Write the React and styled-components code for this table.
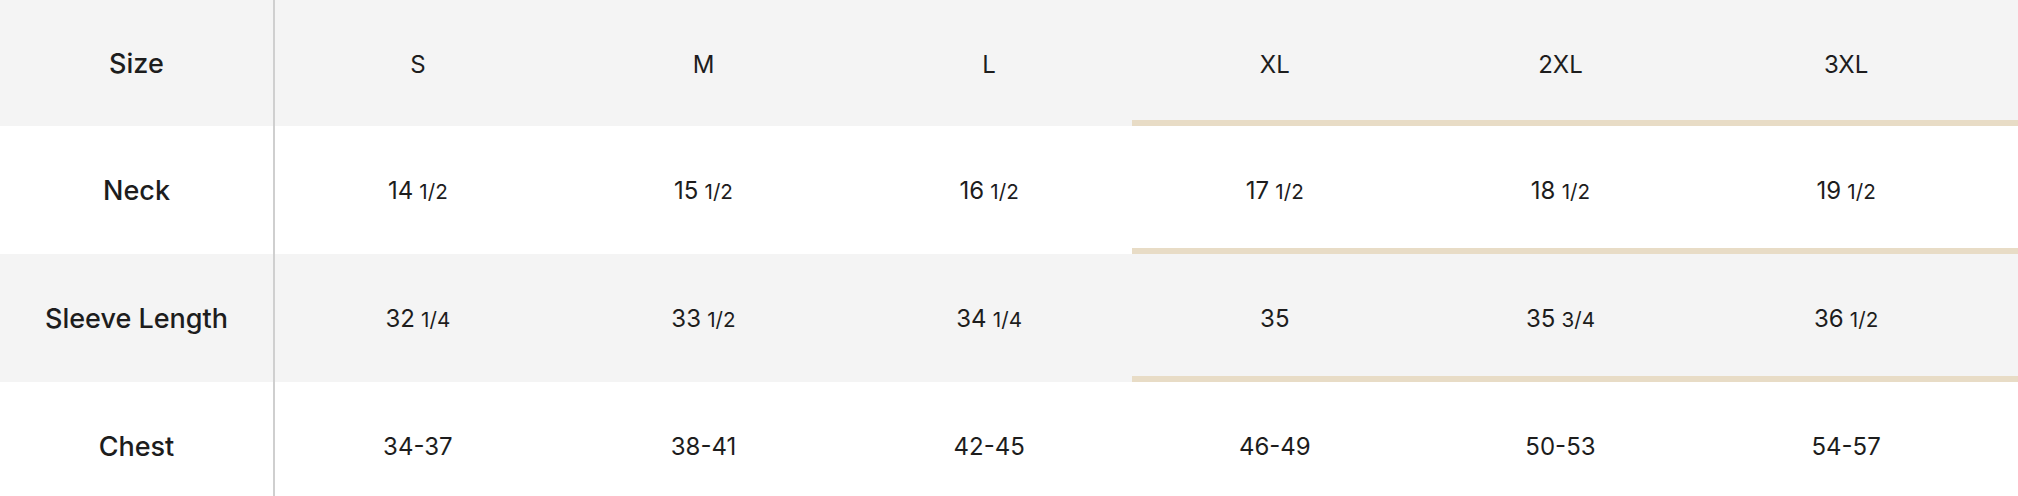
import React from 'react';
import styled, { createGlobalStyle } from 'styled-components';

const GlobalStyle = createGlobalStyle`
  html, body {
    margin: 0;
    padding: 0;
    background: #ffffff;
  }
  body {
    font-family: 'Inter', 'Noto Sans', sans-serif;
    color: #1d1d1d;
    overflow: hidden;
  }
`;

const Table = styled.div`
  width: 100%;
  display: flex;
  flex-direction: column;
`;

const Row = styled.div`
  display: grid;
  grid-template-columns: 275px repeat(6, 285.67px) 1fr;
  height: ${(p) => (p.$header ? '126px' : '128px')};
  background: ${(p) => (p.$shaded ? '#f4f4f4' : '#ffffff')};
`;

const LabelCell = styled.div`
  display: flex;
  align-items: center;
  justify-content: center;
  border-right: 2px solid #cfcfcf;
  font-size: 27px;
  font-weight: 500;
`;

const Cell = styled.div`
  display: flex;
  align-items: baseline;
  justify-content: center;
  padding-top: 50px;
  box-sizing: border-box;
  font-size: 24px;
  font-weight: 400;
  box-shadow: ${(p) => (p.$marked ? 'inset 0 -6px 0 #e8dcc6' : 'none')};
`;

const Fraction = styled.span`
  font-size: 0.86em;
  margin-left: 0.3em;
`;

const sizes = ['S', 'M', 'L', 'XL', '2XL', '3XL'];

const rows = [
  {
    label: 'Neck',
    values: [['14', '1/2'], ['15', '1/2'], ['16', '1/2'], ['17', '1/2'], ['18', '1/2'], ['19', '1/2']]
  },
  {
    label: 'Sleeve Length',
    values: [['32', '1/4'], ['33', '1/2'], ['34', '1/4'], ['35'], ['35', '3/4'], ['36', '1/2']]
  },
  {
    label: 'Chest',
    values: [['34-37'], ['38-41'], ['42-45'], ['46-49'], ['50-53'], ['54-57']]
  }
];

// columns from XL on carry the tan rule under every row but the last
const isMarked = (col, rowIndex) => col >= 3 && rowIndex < rows.length;

const App = () => {
  return (
    <>
      <GlobalStyle />
      <Table>
        <Row $header $shaded>
          <LabelCell>Size</LabelCell>
          {sizes.map((s, i) => (
            <Cell key={s} $marked={isMarked(i, 0)}>{s}</Cell>
          ))}
          <Cell $marked />
        </Row>
        {rows.map((row, r) => (
          <Row key={row.label} $shaded={r % 2 === 1}>
            <LabelCell>{row.label}</LabelCell>
            {row.values.map(([whole, frac], i) => (
              <Cell key={i} $marked={isMarked(i, r + 1)}>
                {whole}
                {frac && <Fraction>{frac}</Fraction>}
              </Cell>
            ))}
            <Cell $marked={r + 1 < rows.length} />
          </Row>
        ))}
      </Table>
    </>
  );
};

export default App;
